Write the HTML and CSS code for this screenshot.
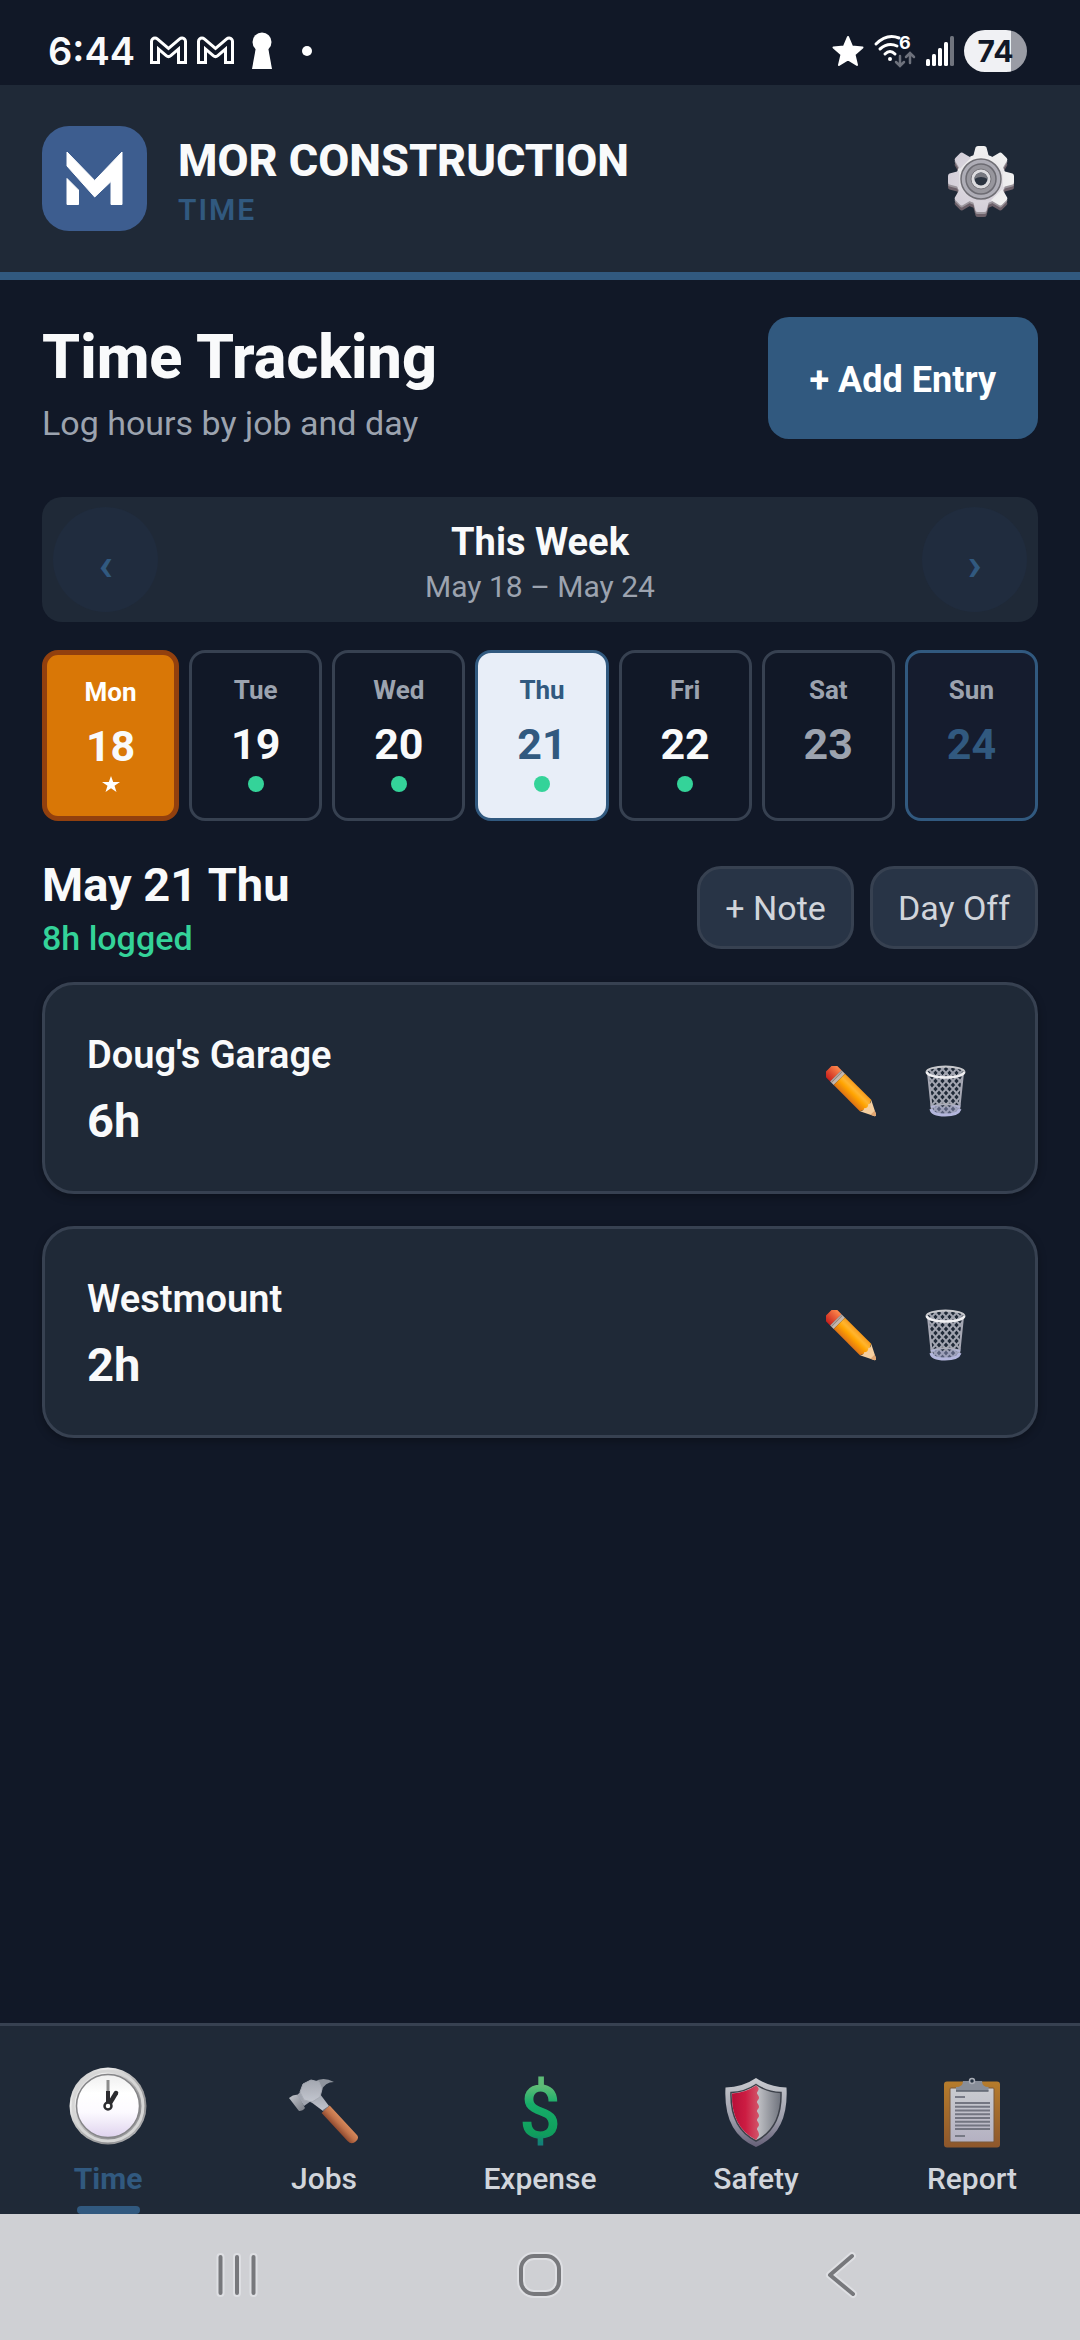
FILE: index.html
```html
<!DOCTYPE html>
<html lang="en">
<head>
  <meta charset="UTF-8">
  <meta name="viewport" content="width=device-width, initial-scale=1.0">
  <title>MOR Construction - Time</title>
  <link rel="stylesheet" href="styles.css">
</head>
<body>
  <!-- Shared icons -->
  <svg class="sprite" width="0" height="0" aria-hidden="true">
    <defs>
      <linearGradient id="pencilBody" x1="0" y1="0" x2="0" y2="1">
        <stop offset="0" stop-color="#f79a1c"/>
        <stop offset=".3" stop-color="#ffb52e"/>
        <stop offset=".55" stop-color="#ffa300"/>
        <stop offset="1" stop-color="#dd7216"/>
      </linearGradient>
      <linearGradient id="eraser" x1="0" y1="0" x2="0" y2="1">
        <stop offset="0" stop-color="#ff8a4c"/>
        <stop offset="1" stop-color="#c8201c"/>
      </linearGradient>
      <linearGradient id="binWire" x1="0" y1="0" x2="0" y2="1">
        <stop offset="0" stop-color="#a9abb2"/>
        <stop offset="1" stop-color="#b3b6dc"/>
      </linearGradient>
      <pattern id="mesh" width="7" height="8" patternUnits="userSpaceOnUse">
        <path d="M0 0L7 8M7 0L0 8" stroke="#a2a5b0" stroke-width="2"/>
      </pattern>
    </defs>
    <symbol id="pencil" viewBox="0 0 50 51">
      <g transform="translate(7 7) rotate(45)">
        <path d="M-4 -8H4V8H-4Q-6 8 -6 5V-5Q-6 -8 -4 -8Z" fill="url(#eraser)"/>
        <rect x="4" y="-8" width="5" height="16" fill="#c5b7ad"/>
        <rect x="5" y="-8" width="1" height="16" fill="#8d7f7a"/>
        <path d="M9 -8H46L50 0L46 8H9Z" fill="url(#pencilBody)"/>
        <path d="M46 -8L60 -1Q61 0 60 1L46 8Q49 5 47 3Q50 0 47 -3Q49 -5 46 -8Z" fill="#f6cf9f"/>
        <path d="M56 -3L60 -1Q61 0 60 1L56 3Z" fill="#e2a672"/>
      </g>
    </symbol>
    <symbol id="bin" viewBox="0 0 41 52">
      <path d="M3 8L7 47Q20 54 34 47L38 8Z" fill="url(#mesh)"/>
      <path d="M5 39L7 47Q20 54 34 47L36 39Q20 45 5 39Z" fill="#9c9fc9" opacity=".45"/>
      <path d="M3 8L7 46M38 8L34 46" stroke="#a5a7b3" stroke-width="2" fill="none"/>
      <path d="M6 44Q7 50 20 50T35 44" stroke="#b3b6dc" stroke-width="3" fill="none"/>
      <path d="M6 42Q20 36 35 42" stroke="url(#binWire)" stroke-width="2" fill="none"/>
      <ellipse cx="20.500" cy="7" rx="19" ry="5.500" fill="url(#mesh)" stroke="#c7c8cc" stroke-width="2"/>
      <path d="M2 7Q3 12 20.500 12.500Q38 12 39 7" stroke="#efeff2" stroke-width="2.500" fill="none"/>
    </symbol>
  </svg>

  <div class="status-bar">
    <div class="status-left">
      <span class="clock">6:44</span>
      <svg width="37" height="30" viewBox="0 0 37 30" fill="none" stroke-linejoin="round">
        <path d="M5 28V5.500L18.500 17L32 5.500V28" stroke="#fff" stroke-width="10"/>
        <path d="M5 25V5.500L18.500 17L32 5.500V25" stroke="#111827" stroke-width="4"/>
      </svg>
      <svg width="37" height="30" viewBox="0 0 37 30" fill="none" stroke-linejoin="round">
        <path d="M5 28V5.500L18.500 17L32 5.500V28" stroke="#fff" stroke-width="10"/>
        <path d="M5 25V5.500L18.500 17L32 5.500V25" stroke="#111827" stroke-width="4"/>
      </svg>
      <svg class="keyhole" width="20" height="38" viewBox="0 0 20 38" fill="#fff">
        <circle cx="10" cy="10" r="9.500"/>
        <path d="M4 15H16L20 37H0Z"/>
      </svg>
      <span class="status-dot"></span>
    </div>
    <div class="status-right">
      <svg width="32" height="32" viewBox="0 0 32 32" fill="#fff" stroke="#fff" stroke-width="2" stroke-linejoin="round">
        <path d="M16 2L20 11.500L30.500 12.500L22.500 19.500L25 30L16 24.500L7 30L9.500 19.500L1.500 12.500L12 11.500Z"/>
      </svg>
      <svg width="42" height="34" viewBox="0 0 42 34" fill="none" stroke="#fff" stroke-width="3" stroke-linecap="round">
        <path d="M2 10Q13 -1 25 4"/>
        <path d="M6 15Q14 8 23 12"/>
        <path d="M11 20Q16 15 21 20"/>
        <circle cx="16" cy="25" r="2" fill="#fff" stroke="none"/>
        <text x="25" y="15" class="wifi-gen">6</text>
        <path d="M26 22V31M22 28L26 32L30 28M36 29V20M32 23L36 19L40 23" stroke="#6d717c" stroke-width="2.500"/>
      </svg>
      <svg width="28" height="30" viewBox="0 0 28 30" fill="#fff">
        <rect x="0" y="23" width="4" height="7" rx="1.500"/>
        <rect x="6" y="18" width="4" height="12" rx="1.500"/>
        <rect x="12" y="12" width="4" height="18" rx="1.500"/>
        <rect x="18" y="6" width="4" height="24" rx="1.500"/>
        <rect x="24" y="0" width="4" height="30" rx="1.500" fill="#70747e"/>
      </svg>
      <span class="battery">74</span>
    </div>
  </div>

  <header class="header">
    <svg class="logo" viewBox="0 0 105 105" role="img" aria-label="MOR">
      <rect width="105" height="105" rx="27" fill="#3d5d8f"/>
      <g fill="#fff" stroke="#fff" stroke-width="1" stroke-linejoin="round">
        <path d="M25 26L52.700 54.500L80 26V78.500H69V55.500L52.700 71L25 40Z"/>
        <path d="M25 52.500L36.500 64V78.500H25Z"/>
      </g>
    </svg>
    <div class="brand">
      <div class="brand-name">MOR CONSTRUCTION</div>
      <div class="brand-section">TIME</div>
    </div>
    <button class="settings" aria-label="Settings">
      <svg width="68" height="80" viewBox="0 0 68 80">
        <defs>
          <linearGradient id="gearFace" x1="0" y1="0" x2="0" y2="1">
            <stop offset="0" stop-color="#f1f1f1"/>
            <stop offset="1" stop-color="#d3ced8"/>
          </linearGradient>
          <g id="gearShape">
            <circle cx="34" cy="40" r="25"/>
            <path id="teeth" d="M28.500 8.500Q29 7 31 7H37Q39 7 39.500 8.500L42 18H26ZM28.500 71.500Q29 73 31 73H37Q39 73 39.500 71.500L42 62H26Z"/>
            <use href="#teeth" transform="rotate(45 34 40)"/>
            <use href="#teeth" transform="rotate(90 34 40)"/>
            <use href="#teeth" transform="rotate(135 34 40)"/>
          </g>
        </defs>
        <use href="#gearShape" fill="#6c6069" y="5"/>
        <use href="#gearShape" fill="#9a949b" y="2"/>
        <use href="#gearShape" fill="url(#gearFace)"/>
        <circle cx="34" cy="40" r="20" fill="#aeadb6" stroke="#6f6e74" stroke-width="1.500"/>
        <circle cx="34" cy="40" r="15" fill="#97969d" stroke="#6c6b72" stroke-width="1.500"/>
        <circle cx="34" cy="40" r="10" fill="#dcdcdf" stroke="#77767c"/>
        <circle cx="34" cy="40" r="6.500" fill="#2b3440"/>
        <path d="M27.500 40A6.500 6.500 0 0 1 40.500 40Q34 36 27.500 40Z" fill="#76787f"/>
      </svg>
    </button>
  </header>

  <main class="content">
    <section class="page-head">
      <div>
        <h1>Time Tracking</h1>
        <p class="subtitle">Log hours by job and day</p>
      </div>
      <button class="btn-primary">+ Add Entry</button>
    </section>

    <section class="week-nav">
      <button class="week-arrow" aria-label="Previous week">‹</button>
      <div class="week-label">
        <div class="week-title">This Week</div>
        <div class="week-range">May 18 – May 24</div>
      </div>
      <button class="week-arrow" aria-label="Next week">›</button>
    </section>

    <section class="days">
      <button class="day holiday">
        <span class="day-name">Mon</span>
        <span class="day-num">18</span>
        <svg class="day-star" viewBox="0 0 18 16" fill="#fff"><path d="M9 0L11.200 6H18L12.500 9.700L14.500 16L9 12.200L3.500 16L5.500 9.700L0 6H6.800Z"/></svg>
      </button>
      <button class="day">
        <span class="day-name">Tue</span>
        <span class="day-num">19</span>
        <span class="day-dot"></span>
      </button>
      <button class="day">
        <span class="day-name">Wed</span>
        <span class="day-num">20</span>
        <span class="day-dot"></span>
      </button>
      <button class="day selected">
        <span class="day-name">Thu</span>
        <span class="day-num">21</span>
        <span class="day-dot"></span>
      </button>
      <button class="day">
        <span class="day-name">Fri</span>
        <span class="day-num">22</span>
        <span class="day-dot"></span>
      </button>
      <button class="day empty">
        <span class="day-name">Sat</span>
        <span class="day-num">23</span>
      </button>
      <button class="day today">
        <span class="day-name">Sun</span>
        <span class="day-num">24</span>
      </button>
    </section>

    <section class="day-head">
      <div>
        <h2>May 21 Thu</h2>
        <p class="logged">8h logged</p>
      </div>
      <div class="day-actions">
        <button class="btn-secondary">+ Note</button>
        <button class="btn-secondary">Day Off</button>
      </div>
    </section>

    <section class="entries">
      <article class="entry">
        <div class="entry-info">
          <h3>Doug's Garage</h3>
          <p class="hours">6h</p>
        </div>
        <button class="icon-btn" aria-label="Edit"><svg width="50" height="51"><use href="#pencil"/></svg></button>
        <button class="icon-btn" aria-label="Delete"><svg width="41" height="52"><use href="#bin"/></svg></button>
      </article>
      <article class="entry">
        <div class="entry-info">
          <h3>Westmount</h3>
          <p class="hours">2h</p>
        </div>
        <button class="icon-btn" aria-label="Edit"><svg width="50" height="51"><use href="#pencil"/></svg></button>
        <button class="icon-btn" aria-label="Delete"><svg width="41" height="52"><use href="#bin"/></svg></button>
      </article>
    </section>
  </main>

  <nav class="tabs">
    <a href="#time" class="tab active">
      <svg class="tab-icon" viewBox="0 0 78 82">
        <defs>
          <linearGradient id="rim" x1="0" y1="0" x2="1" y2="1">
            <stop offset="0" stop-color="#a9a9a9"/>
            <stop offset=".25" stop-color="#ededed"/>
            <stop offset=".5" stop-color="#b5b5b5"/>
            <stop offset=".75" stop-color="#8d8d90"/>
            <stop offset="1" stop-color="#e6e6e6"/>
          </linearGradient>
          <linearGradient id="dial" x1="0" y1="0" x2="0" y2="1">
            <stop offset="0" stop-color="#efefef"/>
            <stop offset=".3" stop-color="#fff"/>
            <stop offset=".6" stop-color="#fcfaff"/>
            <stop offset="1" stop-color="#dfd3ee"/>
          </linearGradient>
        </defs>
        <circle cx="39" cy="39" r="38.500" fill="url(#rim)"/>
        <circle cx="39" cy="39" r="35" fill="none" stroke="#d6d6d6" stroke-width="3"/>
        <circle cx="39" cy="39" r="31.500" fill="url(#dial)" stroke="#858588" stroke-width="1.500"/>
        <path d="M39 13V26" stroke="#8c8c8c" stroke-width="3"/>
        <path d="M39 24V36" stroke="#2c2c30" stroke-width="4"/>
        <path d="M41 36L47 26" stroke="#2c2c30" stroke-width="4.500" stroke-linecap="round"/>
        <circle cx="39" cy="39" r="3.500" fill="#fff" stroke="#2c2c30" stroke-width="2.500"/>
      </svg>
      <span>Time</span>
    </a>
    <a href="#jobs" class="tab">
      <svg class="tab-icon" viewBox="0 0 78 82">
        <defs>
          <linearGradient id="steel" x1="0" y1="0" x2="0" y2="1">
            <stop offset="0" stop-color="#a3a7b0"/>
            <stop offset="1" stop-color="#c3c6cf"/>
          </linearGradient>
          <linearGradient id="steelFace" x1="0" y1="0" x2="1" y2="1">
            <stop offset="0" stop-color="#c3c6cd"/>
            <stop offset="1" stop-color="#777b84"/>
          </linearGradient>
          <linearGradient id="wood" x1="0" y1="0" x2="0" y2="1">
            <stop offset="0" stop-color="#d68a5c"/>
            <stop offset=".5" stop-color="#c0724a"/>
            <stop offset="1" stop-color="#8f4a30"/>
          </linearGradient>
        </defs>
        <path d="M29 15Q38 9 49 15Q40 15 36 24Z" fill="#8f949d"/>
        <path d="M4 31Q9 27 13 28L20 41Q18 44 14 44Z" fill="url(#steelFace)"/>
        <path d="M12 28L19 22L26 34L19 39Z" fill="#a0a4ae"/>
        <path d="M26 35L35 27L44 39L38 44Z" fill="url(#steel)"/>
        <path d="M18 17L26 13L34 15L37 22L35 30L27 35L19 33L15 25Z" fill="url(#steel)" stroke="#a6aab3" stroke-width="1" stroke-linejoin="round"/>
        <path d="M38 44L44 40" stroke="#6d717c" stroke-width="2"/>
        <g transform="translate(41 42) rotate(47)">
          <path d="M0 -5H38Q44 -6 44 0T38 6H0Z" fill="url(#wood)"/>
        </g>
      </svg>
      <span>Jobs</span>
    </a>
    <a href="#expense" class="tab">
      <svg class="tab-icon" viewBox="0 0 78 82">
        <defs>
          <linearGradient id="cash" x1="0" y1="0" x2="0" y2="1">
            <stop offset=".2" stop-color="#5dbb76"/>
            <stop offset=".4" stop-color="#16ad69"/>
            <stop offset=".75" stop-color="#0f9d5c"/>
            <stop offset=".85" stop-color="#137f78"/>
          </linearGradient>
        </defs>
        <text x="39" y="71" class="dollar" fill="url(#cash)">$</text>
      </svg>
      <span>Expense</span>
    </a>
    <a href="#safety" class="tab">
      <svg class="tab-icon" viewBox="0 0 78 82">
        <defs>
          <linearGradient id="shieldRim" x1="0" y1="0" x2="0" y2="1">
            <stop offset="0" stop-color="#c9cbd0"/>
            <stop offset=".6" stop-color="#9c9daa"/>
            <stop offset="1" stop-color="#655f77"/>
          </linearGradient>
          <linearGradient id="shieldRed" x1="0" y1="0" x2="1" y2="0">
            <stop offset="0" stop-color="#b80f38"/>
            <stop offset=".5" stop-color="#cc1c42"/>
            <stop offset="1" stop-color="#d2566a"/>
          </linearGradient>
          <linearGradient id="shieldGrey" x1="0" y1="0" x2="1" y2="0">
            <stop offset=".5" stop-color="#c6c7cb"/>
            <stop offset="1" stop-color="#6e727c"/>
          </linearGradient>
        </defs>
        <path d="M39 11Q52 20 69.500 20.500Q72 66 39 80Q6 66 8.500 20.500Q26 20 39 11Z" fill="url(#shieldRim)"/>
        <path d="M39 17.500Q50 25 64 25.500Q65 61 39 74Q13 61 14 25.500Q28 25 39 17.500Z" fill="url(#shieldGrey)" stroke="#3c4049" stroke-width="1.500"/>
        <path d="M39 18.500Q43 21 41 24Q39 26 41 28Q43 31 41 33Q39 35 41 37Q43 40 41 42Q39 44 41 46Q43 49 41 51Q39 53 41 55Q43 58 41 60Q39 62 41 64Q43 68 41 70L39 73Q14 60 15 26.500Q28 26 39 18.500Z" fill="url(#shieldRed)"/>
      </svg>
      <span>Safety</span>
    </a>
    <a href="#report" class="tab">
      <svg class="tab-icon" viewBox="0 0 78 82">
        <defs>
          <linearGradient id="board" x1="0" y1="0" x2="0" y2="1">
            <stop offset="0" stop-color="#b67c2c"/>
            <stop offset="1" stop-color="#8d572c"/>
          </linearGradient>
          <linearGradient id="paper" x1="0" y1="0" x2="0" y2="1">
            <stop offset="0" stop-color="#c9cbcf"/>
            <stop offset="1" stop-color="#b4b1c2"/>
          </linearGradient>
        </defs>
        <rect x="11" y="14.500" width="56" height="66" rx="3" fill="url(#board)"/>
        <rect x="17" y="21" width="44" height="54" rx="1" fill="url(#paper)" stroke="#7b5a3c" stroke-width="1"/>
        <path d="M23 24V20Q30 20 30 14H49Q49 20 55.500 20V24Z" fill="#888e99"/>
        <path d="M23 24H55.500" stroke="#5d626e" stroke-width="1.500"/>
        <circle cx="39" cy="14" r="2.500" fill="#273342" stroke="#a9adb6" stroke-width="1.500"/>
        <path d="M22 30H32M22 69H32" stroke="#777985" stroke-width="2"/>
        <path d="M22 36H57M22 39.700H57M22 43.500H57M22 47.200H57M22 51H57M22 54.700H57M22 58.500H57M22 62H57" stroke="#737581" stroke-width="2"/>
      </svg>
      <span>Report</span>
    </a>
  </nav>

  <div class="system-nav">
    <button aria-label="Recent apps">
      <svg width="50" height="50" viewBox="0 0 50 50" fill="none" stroke-linecap="round">
        <path d="M8.500 7V43M25 7V43M41.500 7V43" stroke="#dedfe3" stroke-width="8"/>
        <path d="M8.500 7V43M25 7V43M41.500 7V43" stroke="#77787c" stroke-width="4"/>
      </svg>
    </button>
    <button aria-label="Home">
      <svg width="50" height="50" viewBox="0 0 50 50" fill="none">
        <rect x="6" y="6" width="38" height="38" rx="13" stroke="#dedfe3" stroke-width="8"/>
        <rect x="6" y="6" width="38" height="38" rx="13" stroke="#77787c" stroke-width="4"/>
      </svg>
    </button>
    <button aria-label="Back">
      <svg width="50" height="50" viewBox="0 0 50 50" fill="none" stroke-linecap="round" stroke-linejoin="round">
        <path d="M34 6L12 25L35 44" stroke="#dedfe3" stroke-width="8"/>
        <path d="M34 6L12 25L35 44" stroke="#77787c" stroke-width="4"/>
      </svg>
    </button>
  </div>
</body>
</html>
```
FILE: styles.css
```css
* {
  box-sizing: border-box;
}
body {
  font-family: Roboto, "Liberation Sans", sans-serif;
  background-color: #111827;
  color: #f9fafb;
  margin: 0;
  min-height: 100vh;
  display: flex;
  flex-direction: column;
}
h1, h2, h3, p {
  margin: 0;
}
button {
  font-family: inherit;
  color: inherit;
  background: none;
  border: none;
  padding: 0;
  cursor: pointer;
}
svg {
  display: block;
  overflow: visible;
}
.sprite {
  position: absolute;
}

/* Status bar */
.status-bar {
  display: flex;
  justify-content: space-between;
  align-items: center;
  height: 85px;
  padding: 17px 53px 0 48px;
}
.status-left, .status-right {
  display: flex;
  align-items: center;
  gap: 10px;
}
.clock {
  font-family: Inter, sans-serif;
  font-size: 38px;
  font-weight: 600;
  line-height: 42px;
  margin-right: 5px;
}
.keyhole {
  margin: 0 20px 0 8px;
}
.status-dot {
  width: 10px;
  height: 10px;
  border-radius: 50%;
  background-color: #fff;
}
.wifi-gen {
  font-family: Inter, sans-serif;
  font-size: 18px;
  font-weight: 700;
  fill: #fff;
  stroke: none;
}
.battery {
  width: 63px;
  height: 42px;
  border-radius: 21px;
  background: linear-gradient(to right, #f0f1f4 74%, #9a9ca5 74%);
  color: #111827;
  font-family: Inter, sans-serif;
  font-size: 30px;
  font-weight: 700;
  line-height: 42px;
  text-align: center;
}

/* Header */
.header {
  display: flex;
  align-items: center;
  padding: 41px 42px;
  background-color: #1f2937;
  border-bottom: 8px solid #31597f;
}
.logo {
  width: 105px;
  height: 105px;
}
.brand {
  flex: 1;
  margin-left: 31px;
  padding-top: 4px;
}
.brand-name {
  font-size: 45px;
  font-weight: 800;
  line-height: 53px;
}
.brand-section {
  margin-top: 6px;
  font-size: 30px;
  font-weight: 600;
  line-height: 34px;
  letter-spacing: 2px;
  color: #31597f;
}
.settings {
  display: flex;
  justify-content: center;
  width: 114px;
}

/* Page content */
.content {
  flex: 1;
  padding: 37px 42px;
}
.page-head {
  display: flex;
  justify-content: space-between;
  align-items: flex-start;
}
h1 {
  font-size: 61px;
  font-weight: 800;
  line-height: 80px;
}
.subtitle {
  margin-top: 6px;
  font-size: 34px;
  line-height: 40px;
  color: #9ca3af;
}
.btn-primary {
  height: 122px;
  padding: 4px 42px 0;
  border-radius: 21px;
  background-color: #31597f;
  color: #fff;
  font-size: 36px;
  font-weight: 700;
}

/* Week picker */
.week-nav {
  display: flex;
  justify-content: space-between;
  align-items: center;
  margin-top: 54px;
  padding: 10px 11px;
  border-radius: 20px;
  background-color: #1f2937;
}
.week-arrow {
  width: 105px;
  height: 105px;
  padding-top: 8px;
  border-radius: 50%;
  background-color: #202c3e;
  color: #31597f;
  font-size: 47px;
  font-weight: 700;
}
.week-label {
  padding-top: 4px;
  text-align: center;
}
.week-title {
  font-size: 38px;
  font-weight: 700;
  line-height: 44px;
}
.week-range {
  margin-top: 6px;
  font-size: 30px;
  line-height: 34px;
  color: #9ca3af;
}
.days {
  display: flex;
  gap: 10px;
  margin-top: 28px;
}
.day {
  flex: 1 1 0;
  display: flex;
  flex-direction: column;
  align-items: center;
  height: 171px;
  padding-top: 22px;
  border: 3px solid #374151;
  border-radius: 16px;
}
.day-name {
  font-size: 26px;
  font-weight: 700;
  line-height: 30px;
  color: #9ca3af;
}
.day-num {
  margin-top: 14px;
  font-size: 43px;
  font-weight: 700;
  line-height: 50px;
}
.day-dot {
  width: 16px;
  height: 16px;
  margin-top: 7px;
  border-radius: 50%;
  background-color: #34d399;
}
.day-star {
  width: 18px;
  height: 16px;
  margin-top: 5px;
}
.day.holiday {
  background-color: #d97706;
  border: 5px solid #92400e;
}
.day.holiday .day-name {
  color: #fff;
}
.day.selected {
  background-color: #e8eef8;
  border-color: #31597f;
}
.day.selected .day-name,
.day.selected .day-num,
.day.today .day-num {
  color: #31597f;
}
.day.empty .day-num {
  color: #9ca3af;
}
.day.today {
  background-color: #151c2e;
  border-color: #31597f;
}

/* Selected day */
.day-head {
  display: flex;
  justify-content: space-between;
  align-items: center;
  margin-top: 36px;
}
h2 {
  font-size: 47px;
  font-weight: 700;
  line-height: 56px;
}
.logged {
  margin-top: 5px;
  font-size: 34px;
  font-weight: 500;
  line-height: 40px;
  color: #34d399;
}
.day-actions {
  display: flex;
  gap: 16px;
}
.btn-secondary {
  height: 83px;
  padding: 0 25px;
  border: 3px solid #374151;
  border-radius: 24px;
  background-color: #283446;
  color: #d1d5db;
  font-size: 34px;
}
.entries {
  display: flex;
  flex-direction: column;
  gap: 32px;
  margin-top: 24px;
}
.entry {
  display: flex;
  align-items: center;
  padding: 48px 42px 42px;
  border: 3px solid #374151;
  border-radius: 32px;
  background-color: #1f2937;
  box-shadow: 0 3px 8px rgba(0, 0, 0, 0.3);
}
.entry-info {
  flex: 1;
}
h3 {
  font-size: 38px;
  font-weight: 600;
  line-height: 44px;
}
.hours {
  margin-top: 16px;
  font-size: 47px;
  font-weight: 700;
  line-height: 56px;
}
.icon-btn {
  display: flex;
  justify-content: center;
  width: 95px;
}

/* Bottom tabs */
.tabs {
  display: flex;
  border-top: 3px solid #374151;
  background-color: #1f2937;
}
.tab {
  position: relative;
  flex: 1;
  display: flex;
  flex-direction: column;
  align-items: center;
  gap: 13px;
  padding: 41px 0 18px;
  color: #d1d5db;
  font-size: 30px;
  font-weight: 500;
  line-height: 34px;
  text-decoration: none;
}
.tab-icon {
  width: 78px;
  height: 82px;
}
.tab.active {
  color: #31597f;
  font-weight: 700;
}
.tab.active::after {
  content: "";
  position: absolute;
  bottom: 0;
  width: 63px;
  height: 8px;
  border-radius: 4px;
  background-color: #31597f;
}
.dollar {
  font-size: 74px;
  font-weight: 500;
  text-anchor: middle;
}

/* System navigation */
.system-nav {
  display: flex;
  align-items: center;
  height: 126px;
  padding: 0 86px 4px;
  background-color: #cfd0d4;
}
.system-nav button {
  flex: 1;
  display: flex;
  justify-content: center;
}
```
